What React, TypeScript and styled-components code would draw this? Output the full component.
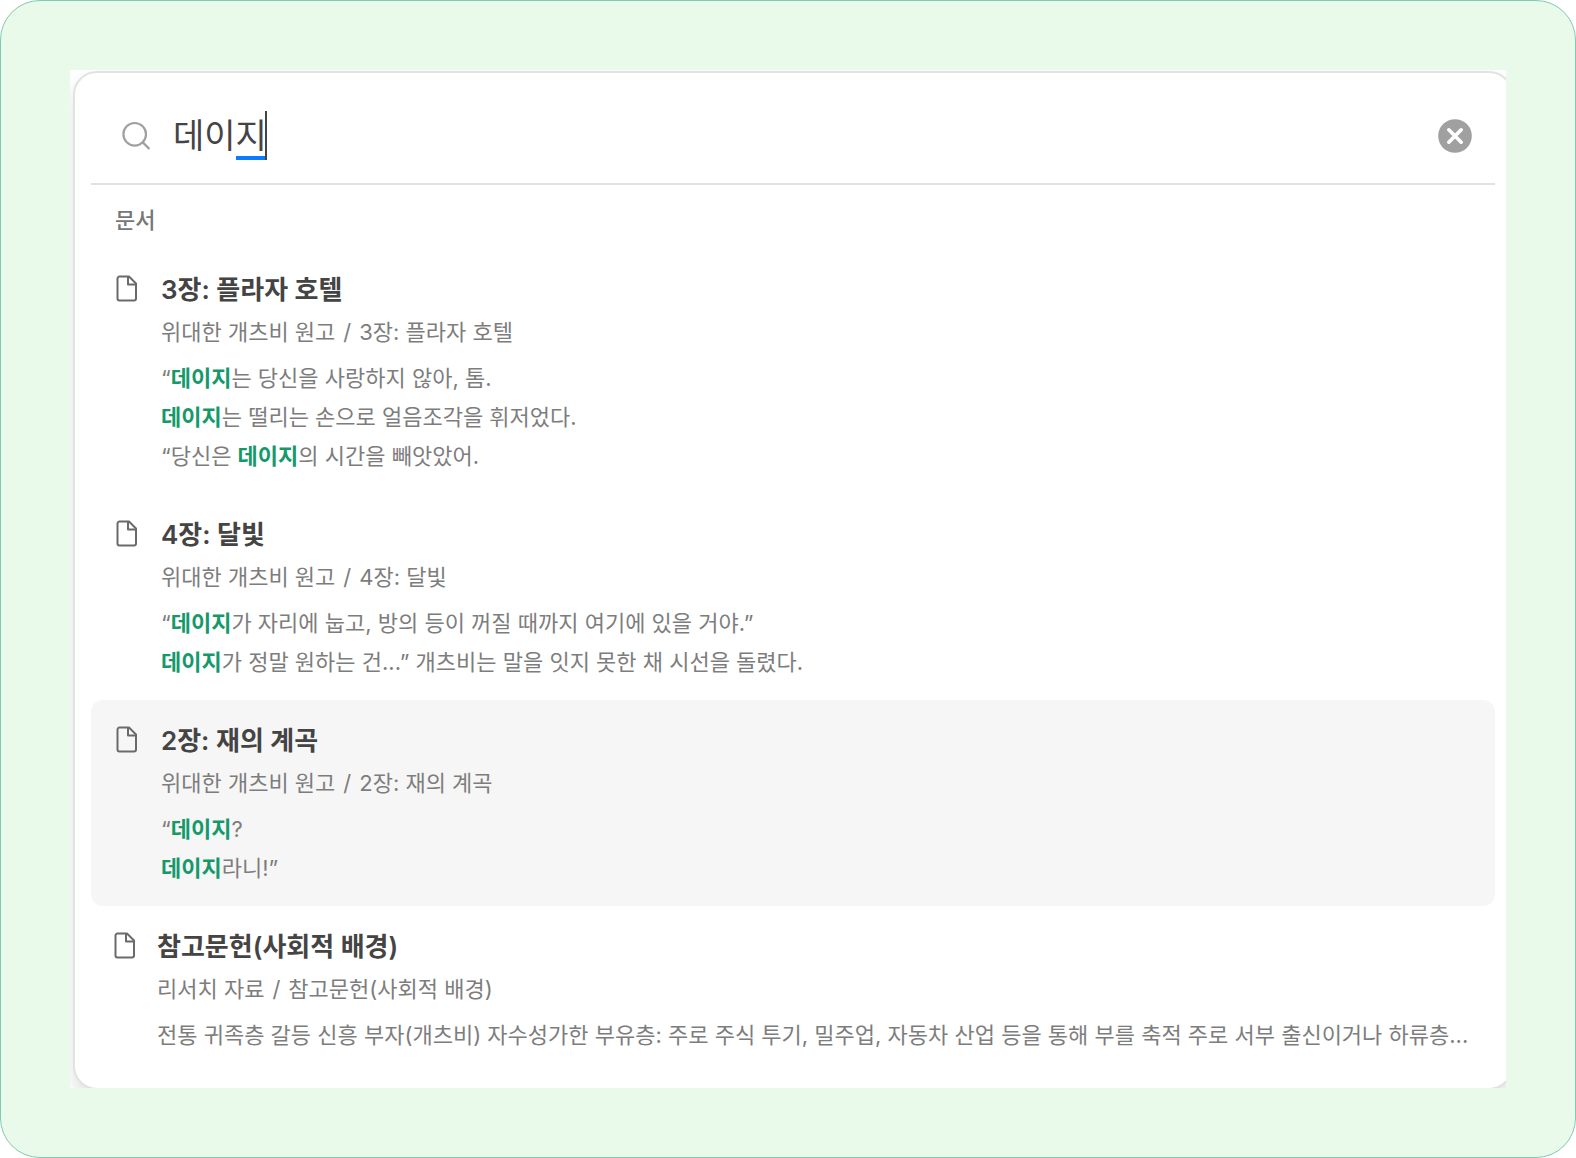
import React, { useState } from "react";
import styled, { createGlobalStyle } from "styled-components";

const GlobalStyle = createGlobalStyle`
  *, *::before, *::after { box-sizing: border-box; }
  body {
    margin: 0;
    background: #ffffff;
    font-family: Inter, "Noto Sans CJK KR", sans-serif;
  }
`;

const Frame = styled.main`
  padding: 69px;
  border: 1px solid #7fcab3;
  border-radius: 40px;
  background: #e9faeb;
`;

const Viewport = styled.div`
  overflow: hidden;
  background: #ffffff;
`;

const Panel = styled.section`
  margin: 1px -7px -2px 3px;
  padding: 0 16px 15px;
  border: 2px solid #e2e2e2;
  border-radius: 24px;
  background: #ffffff;
  box-shadow: 0 8px 16px rgba(0, 0, 0, 0.12);
`;

const SearchBar = styled.form`
  display: flex;
  align-items: center;
  padding: 38px 23px 23px 30px;
  border-bottom: 2px solid #e2e2e2;
`;

const SearchLabel = styled.label`
  display: flex;
  margin-right: 22px;
  color: #a0a0a0;
`;

const Field = styled.div`
  position: relative;
  flex: 1;
  display: flex;
`;

const SearchInput = styled.input`
  width: 100%;
  height: 49px;
  padding: 0;
  border: 0;
  outline: 0;
  background: transparent;
  color: #444444;
  font: 400 34px/49px Inter, "Noto Sans CJK KR", sans-serif;
`;

const Composition = styled.span`
  position: absolute;
  top: 0;
  bottom: 0;
  left: 63px;
  width: 31px;
  border-right: 2px solid #444444;
  pointer-events: none;

  &::after {
    content: "";
    position: absolute;
    right: 0;
    bottom: 0;
    left: 0;
    height: 4px;
    background: #0a7aff;
  }
`;

const ClearButton = styled.button`
  display: flex;
  padding: 0;
  border: 0;
  background: none;
  cursor: pointer;
`;

const SectionTitle = styled.h2`
  margin: 0;
  padding: 15px 24px 9px;
  color: #777777;
  font-size: 22px;
  font-weight: 500;
  line-height: 40px;
`;

const Results = styled.ul`
  margin: 0;
  padding: 0;
  list-style: none;
`;

const Result = styled.a<{ $active?: boolean; $compact?: boolean }>`
  display: flex;
  gap: ${(p) => (p.$compact ? 20 : 22)}px;
  padding: 20px 24px 18px ${(p) => (p.$compact ? 22 : 24)}px;
  border-radius: 12px;
  background: ${(p) => (p.$active ? "#f6f6f6" : "transparent")};
  color: #7d7d7d;
  font-size: 22px;
  line-height: 39px;
  text-decoration: none;
`;

const IconSlot = styled.span`
  display: flex;
  flex: none;
  align-items: center;
  height: 40px;
  color: #6a6a6a;
`;

const ResultText = styled.div`
  flex: 1;
  min-width: 0;
`;

const ResultTitle = styled.h3`
  margin: 0;
  color: #444444;
  font-size: 26px;
  font-weight: 600;
  line-height: 42px;
`;

const Path = styled.p`
  display: flex;
  gap: 8px;
  margin: 2px 0 7px;
`;

const Line = styled.p`
  margin: 0;
  overflow: hidden;
  text-overflow: ellipsis;
  white-space: nowrap;
`;

const Match = styled.mark`
  background: none;
  color: #15996b;
  font-weight: 600;
`;

const SearchIcon = () => (
  <svg width="30" height="30" viewBox="0 0 30 30" fill="none" stroke="currentColor" strokeWidth="2.2" strokeLinecap="round" aria-hidden="true">
    <circle cx="13.7" cy="13.3" r="11.3" />
    <path d="M21.8 21.4l6 6" />
  </svg>
);

const ClearIcon = () => (
  <svg width="34" height="34" viewBox="0 0 34 34" aria-hidden="true">
    <circle cx="17" cy="17" r="16.8" fill="#a0a0a0" />
    <path d="M10.8 10.8l12.4 12.4M23.2 10.8l-12.4 12.4" stroke="#ffffff" strokeWidth="3.6" strokeLinecap="round" />
  </svg>
);

const FileIcon = () => (
  <svg width="24" height="28" viewBox="0 0 24 28" fill="none" stroke="currentColor" strokeWidth="2" strokeLinejoin="round" aria-hidden="true">
    <path d="M4.5 1.5H14L21 8.5V23.5A2 2 0 0 1 19 25.5H4.5A2 2 0 0 1 2.5 23.5V3.5A2 2 0 0 1 4.5 1.5z" />
    <path d="M13 2v7.5h8" />
  </svg>
);

interface Item {
  title: string;
  folder: string;
  lines: string[];
  active?: boolean;
  compact?: boolean;
}

const TERM = "데이지";

const items: Item[] = [
  {
    title: "3장: 플라자 호텔",
    folder: "위대한 개츠비 원고",
    lines: ["“데이지는 당신을 사랑하지 않아, 톰.", "데이지는 떨리는 손으로 얼음조각을 휘저었다.", "“당신은 데이지의 시간을 빼앗았어."],
  },
  {
    title: "4장: 달빛",
    folder: "위대한 개츠비 원고",
    lines: ["“데이지가 자리에 눕고, 방의 등이 꺼질 때까지 여기에 있을 거야.”", "데이지가 정말 원하는 건...” 개츠비는 말을 잇지 못한 채 시선을 돌렸다."],
  },
  {
    title: "2장: 재의 계곡",
    folder: "위대한 개츠비 원고",
    lines: ["“데이지?", "데이지라니!”"],
    active: true,
  },
  {
    title: "참고문헌(사회적 배경)",
    folder: "리서치 자료",
    lines: ["전통 귀족층 갈등 신흥 부자(개츠비) 자수성가한 부유층: 주로 주식 투기, 밀주업, 자동차 산업 등을 통해 부를 축적 주로 서부 출신이거나 하류층..."],
    compact: true,
  },
];

const Highlighted = ({ text }: { text: string }) => (
  <>
    {text.split(TERM).map((part, i) => (
      <React.Fragment key={i}>
        {i > 0 && <Match>{TERM}</Match>}
        {part}
      </React.Fragment>
    ))}
  </>
);

export default function App() {
  const [query, setQuery] = useState(TERM);

  return (
    <>
      <GlobalStyle />
      <Frame>
        <Viewport>
          <Panel>
            <SearchBar role="search" onSubmit={(e) => e.preventDefault()}>
              <SearchLabel htmlFor="query" aria-label="검색">
                <SearchIcon />
              </SearchLabel>
              <Field>
                <SearchInput id="query" type="text" value={query} onChange={(e) => setQuery(e.target.value)} />
                {query === TERM && <Composition aria-hidden="true" />}
              </Field>
              <ClearButton type="button" aria-label="지우기" onClick={() => setQuery("")}>
                <ClearIcon />
              </ClearButton>
            </SearchBar>
            <SectionTitle>문서</SectionTitle>
            <Results>
              {items.map((item) => (
                <li key={item.title}>
                  <Result href="#" $active={item.active} $compact={item.compact}>
                    <IconSlot>
                      <FileIcon />
                    </IconSlot>
                    <ResultText>
                      <ResultTitle>{item.title}</ResultTitle>
                      <Path>
                        <span>{item.folder}</span>
                        <span>/</span>
                        <span>{item.title}</span>
                      </Path>
                      {item.lines.map((line) => (
                        <Line key={line}>
                          <Highlighted text={line} />
                        </Line>
                      ))}
                    </ResultText>
                  </Result>
                </li>
              ))}
            </Results>
          </Panel>
        </Viewport>
      </Frame>
    </>
  );
}
